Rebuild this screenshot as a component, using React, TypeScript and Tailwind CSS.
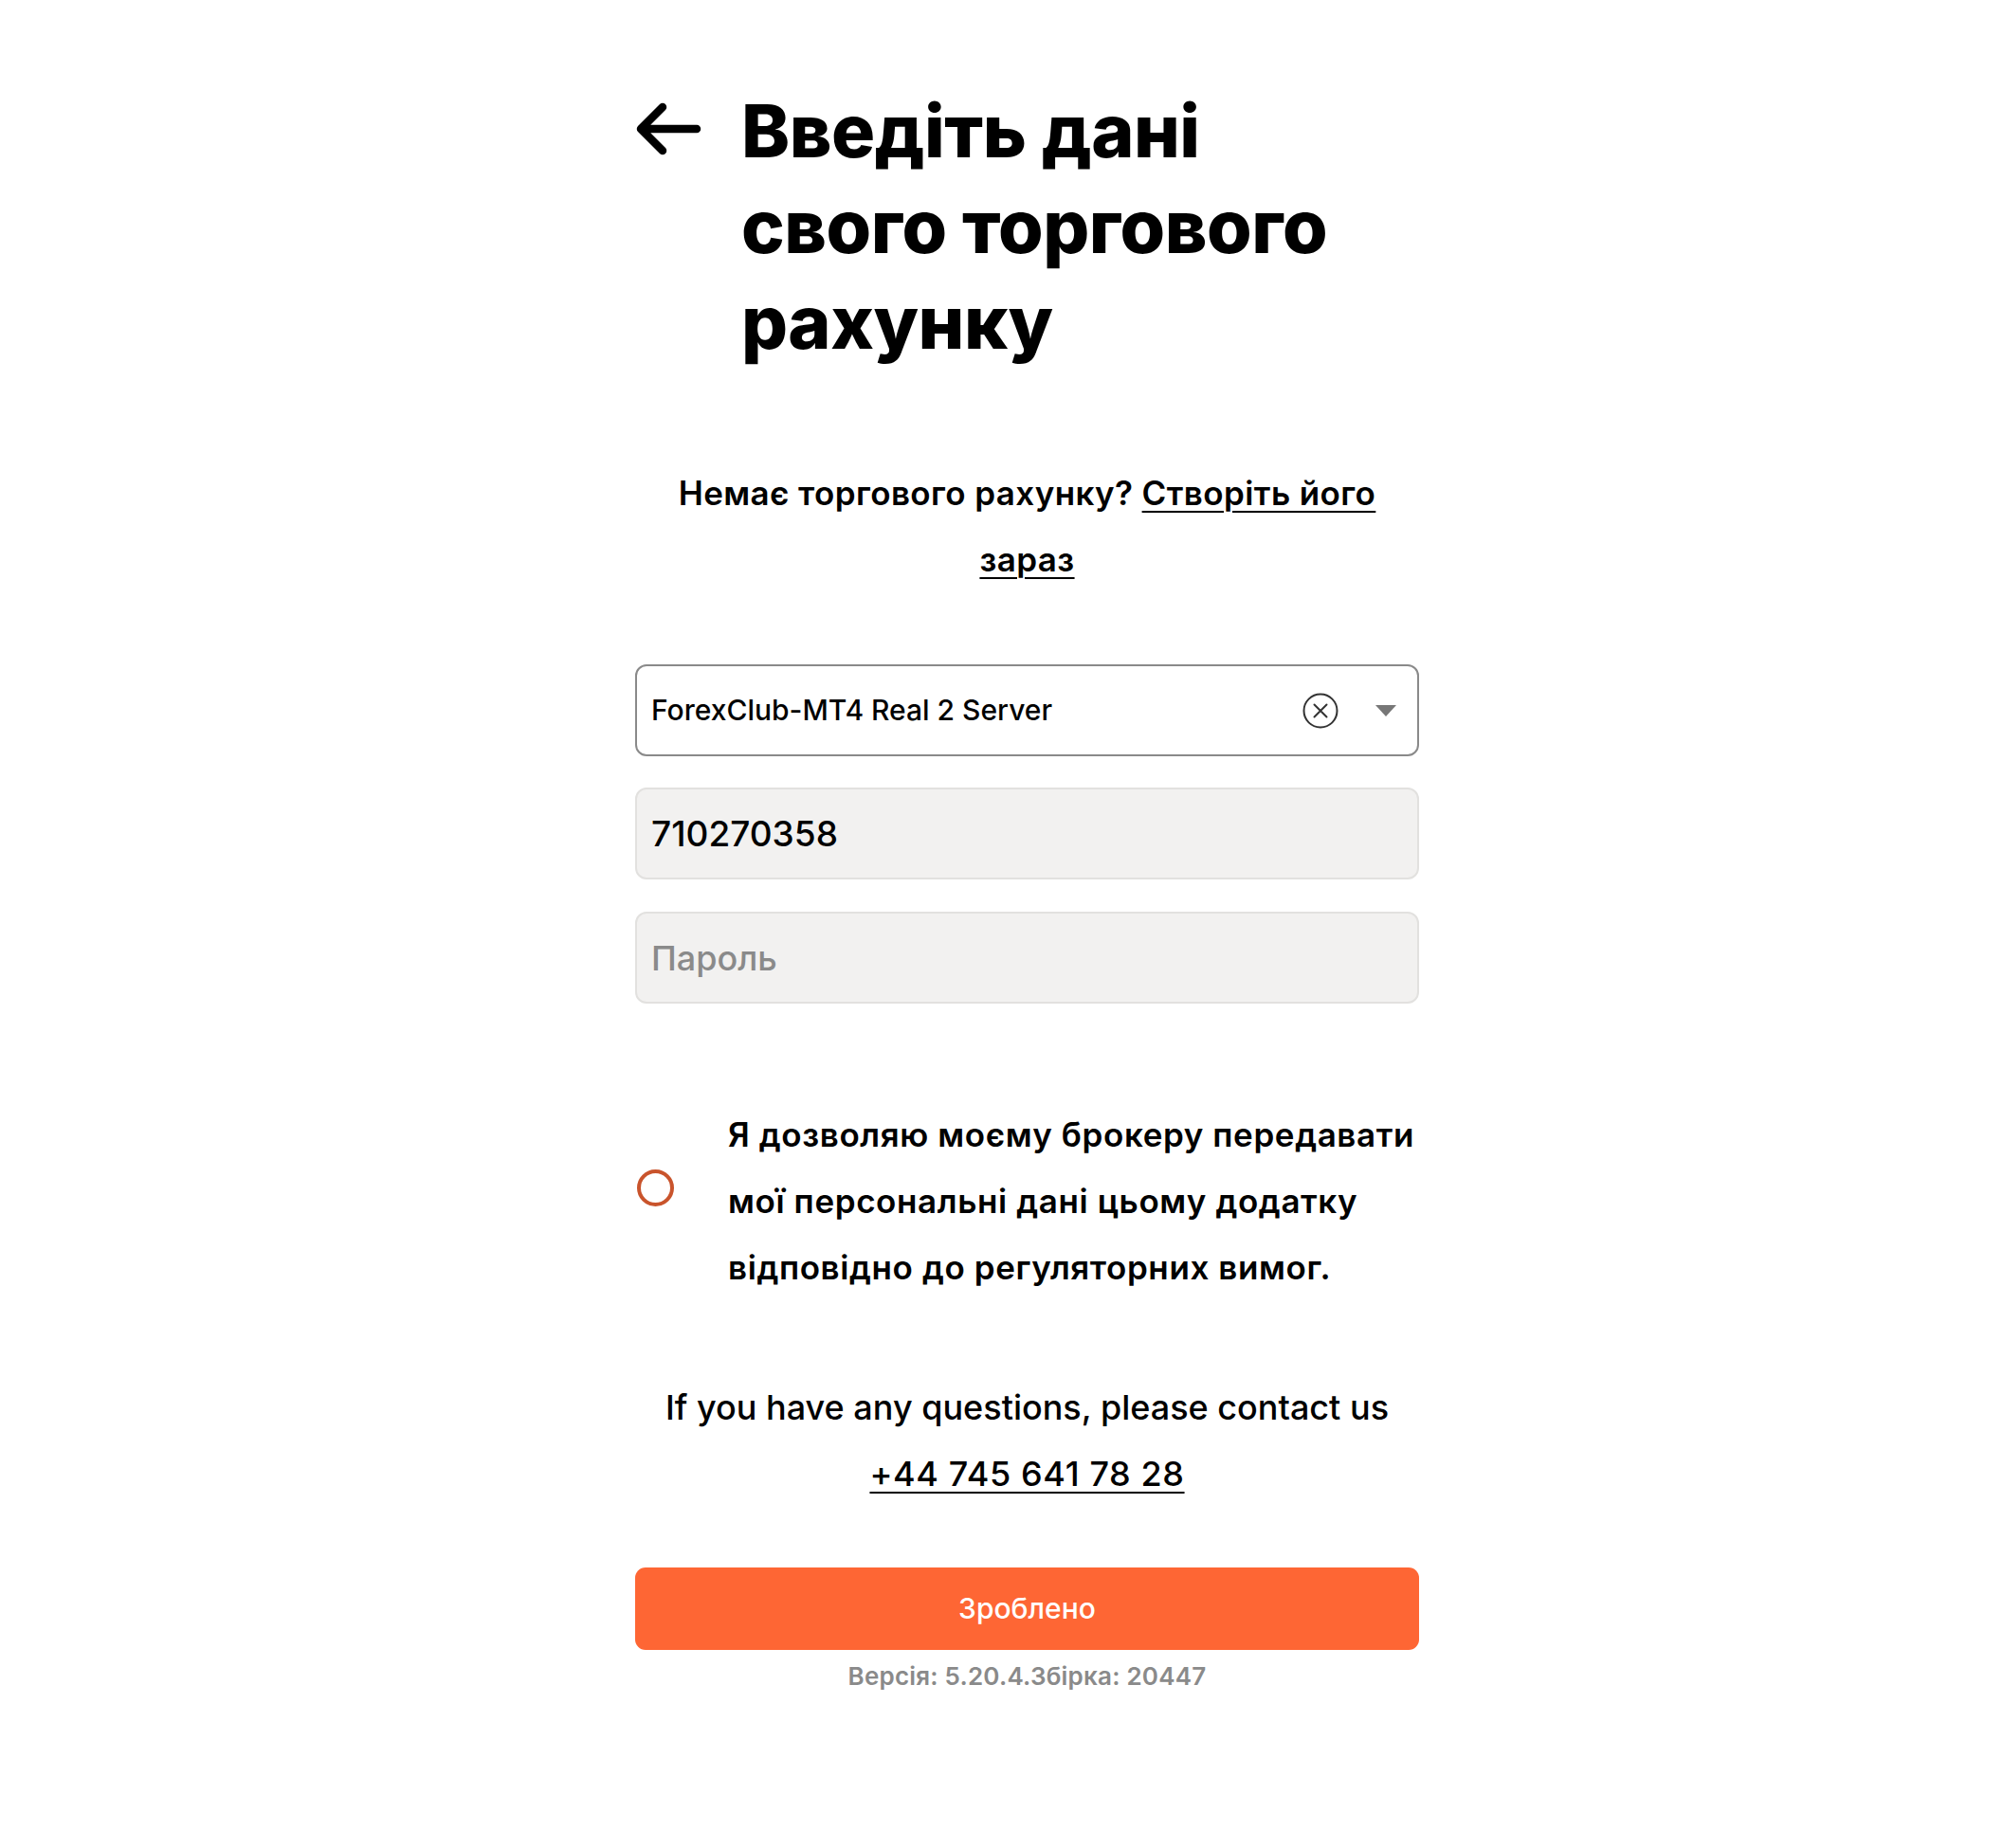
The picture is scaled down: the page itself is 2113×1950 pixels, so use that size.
import React from 'react';

const font = { fontFamily: 'Inter, Roboto, "Noto Sans", sans-serif' };

function BackArrow() {
  return (
    <svg width="70" height="60" viewBox="0 0 70 60" fill="none" className="shrink-0">
      <path d="M65 30H7M29 7L6 30l23 23" stroke="#000" strokeWidth="8.5" strokeLinecap="round" strokeLinejoin="round" />
    </svg>
  );
}

function ClearIcon() {
  return (
    <svg width="38" height="38" viewBox="0 0 38 38" fill="none">
      <circle cx="19" cy="19" r="17.5" stroke="#333" strokeWidth="2" />
      <path d="M12.5 12.5l13 13M25.5 12.5l-13 13" stroke="#333" strokeWidth="2" strokeLinecap="round" />
    </svg>
  );
}

export default function App() {
  return (
    <div className="min-h-[1950px] w-full bg-white text-black" style={font}>
      <div className="ml-[670px] flex w-[827px] flex-col pt-[88px]">
        <div className="flex items-start">
          <div className="mt-[18px] w-[112px]">
            <BackArrow />
          </div>
          <h1 className="text-[77px] font-extrabold leading-[101px] tracking-[-0.5px]">
            Введіть дані
            <br />
            свого торгового
            <br />
            рахунку
          </h1>
        </div>

        <p className="mt-[94px] text-center text-[35px] font-semibold leading-[70px] tracking-[0.4px]">
          Немає торгового рахунку?{' '}
          <a href="#" className="underline decoration-2 underline-offset-[6px]">
            Створіть його
          </a>{' '}
          <a href="#" className="underline decoration-2 underline-offset-[6px]">
            зараз
          </a>
        </p>

        <div className="mt-[76px] flex h-[97px] items-center rounded-[12px] border-2 border-[#8a8a8a] bg-white pl-[15px] pr-[22px]">
          <span className="flex-1 text-[30px] font-medium">ForexClub-MT4 Real 2 Server</span>
          <ClearIcon />
          <svg width="22" height="12" viewBox="0 0 22 12" className="ml-[39px]">
            <path d="M0 0h22L11 12z" fill="#777" />
          </svg>
        </div>

        <div className="mt-[33px] flex h-[97px] items-center rounded-[12px] border-2 border-[#e2e1df] bg-[#f2f1f0] px-[15px]">
          <span className="text-[37px] font-medium">710270358</span>
        </div>

        <div className="mt-[34px] flex h-[97px] items-center rounded-[12px] border-2 border-[#e2e1df] bg-[#f2f1f0] px-[15px]">
          <span className="text-[36px] font-medium text-[#8a8a8a]">Пароль</span>
        </div>

        <div className="mt-[103px] flex items-center">
          <div className="mb-[28px] ml-[2px] h-[39px] w-[39px] shrink-0 rounded-full border-[4px] border-[#c9542c]" />
          <p className="ml-[57px] text-[35px] font-semibold leading-[70px] tracking-[0.6px]">
            Я дозволяю моєму брокеру передавати мої персональні дані цьому додатку відповідно до регуляторних вимог.
          </p>
        </div>

        <div className="mt-[78px] text-center text-[36px] font-medium leading-[70px]">
          <p>If you have any questions, please contact us</p>
          <a href="#" className="tracking-[0.6px] underline decoration-2 underline-offset-[6px]">
            +44 745 641 78 28
          </a>
        </div>

        <button className="mt-[64px] h-[87px] rounded-[11px] bg-[#fe6634] text-[30px] font-medium text-white">
          Зроблено
        </button>

        <p className="mt-[12px] text-center text-[26px] font-semibold leading-[32px] tracking-[0.2px] text-[#8a8a8a]">
          Версія: 5.20.4.Збірка: 20447
        </p>
      </div>
    </div>
  );
}
